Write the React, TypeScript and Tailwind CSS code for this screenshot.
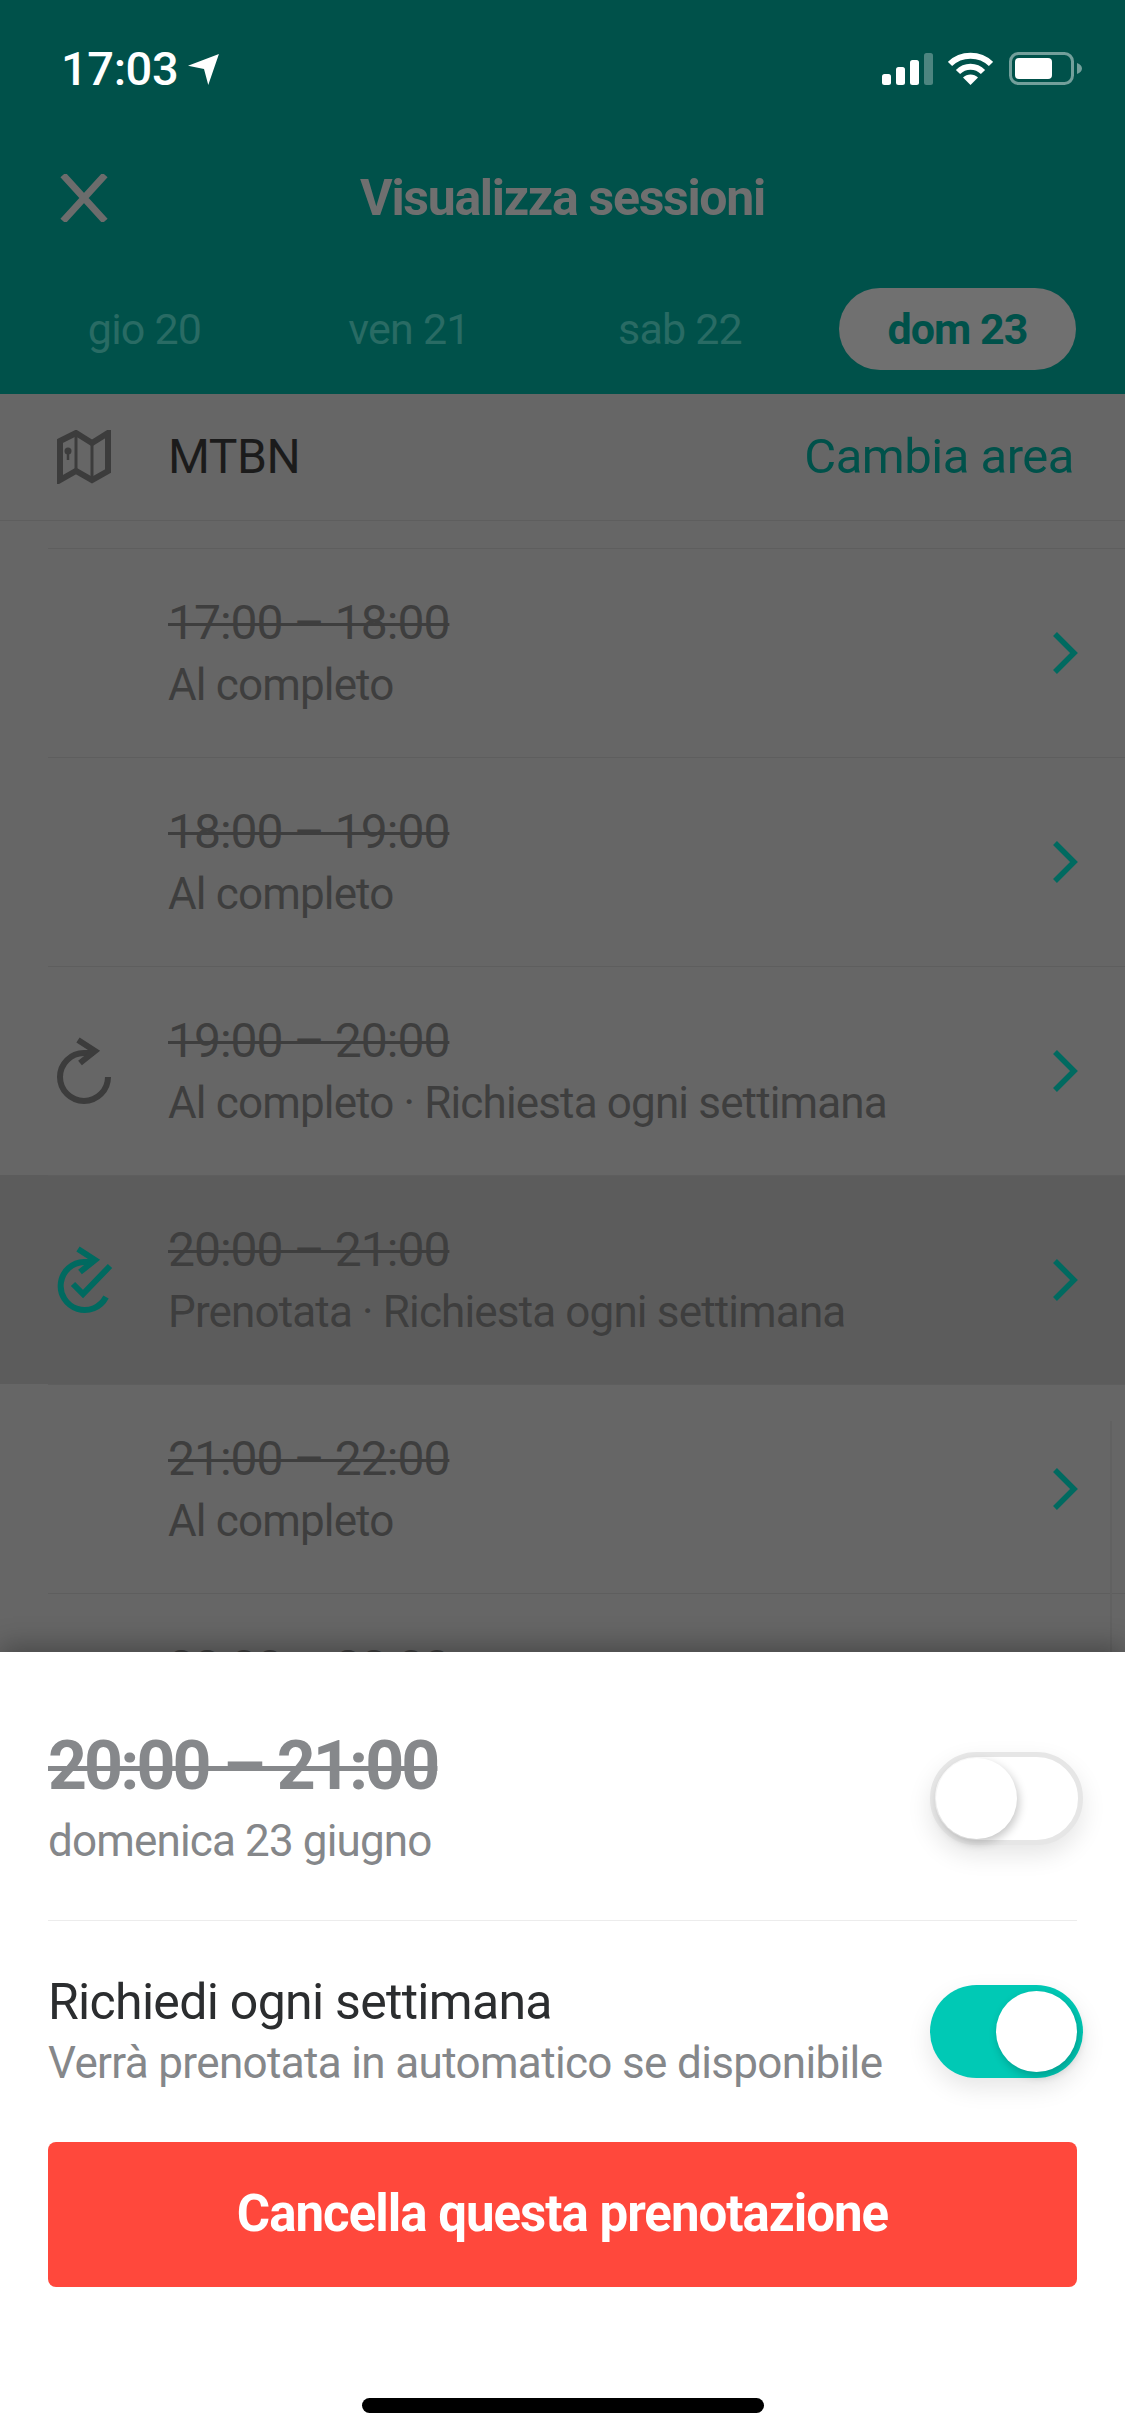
const font = "font-['Roboto',sans-serif]";

const sessions = [
  { time: "17:00 – 18:00", note: "Al completo" },
  { time: "18:00 – 19:00", note: "Al completo" },
  { time: "19:00 – 20:00", note: "Al completo · Richiesta ogni settimana", icon: "repeat" },
  { time: "20:00 – 21:00", note: "Prenotata · Richiesta ogni settimana", icon: "booked", active: true },
  { time: "21:00 – 22:00", note: "Al completo" },
  { time: "22:00 – 23:00", note: "Al completo" },
];

function RepeatIcon() {
  return (
    <svg width="60" height="70" viewBox="0 0 60 70" fill="none" stroke="#3c3c3c" strokeWidth="6">
      <path d="M54 41A24 24 0 1 1 30 17H40" />
      <path d="M24 4L41 15L26 27" />
    </svg>
  );
}

function BookedIcon() {
  return (
    <svg width="60" height="70" viewBox="0 0 60 70" fill="none" stroke="#006a60" strokeWidth="6">
      <path d="M52 52A24 24 0 1 1 30 17H40" />
      <path d="M24 4L41 15L26 27" />
      <path d="M19 39L29 49L56 21" />
    </svg>
  );
}

function Chevron() {
  return (
    <svg width="26" height="42" viewBox="0 0 26 42" fill="none" stroke="#006a60" strokeWidth="5.5">
      <path d="M3 2L22 21L3 40" />
    </svg>
  );
}

function MapIcon() {
  return (
    <svg width="54" height="54" viewBox="0 0 54 54" fill="none" stroke="#3c3c3c" strokeWidth="6">
      <path d="M3 11L19 3L35 13L51 3V41L35 50L19 41L3 50Z" />
      <path d="M19 3V41M35 13V50" strokeWidth="3" />
      <circle cx="11" cy="21" r="3.5" fill="#3c3c3c" stroke="none" />
      <path d="M11 22V30" strokeWidth="2.5" />
    </svg>
  );
}

function StatusIcons() {
  return (
    <div className="flex items-center">
      <svg width="51" height="32" viewBox="0 0 51 32" fill="#fff">
        <rect x="0" y="21" width="9" height="11" rx="2.5" />
        <rect x="14" y="14" width="9" height="18" rx="2.5" />
        <rect x="28" y="7" width="9" height="25" rx="2.5" />
        <rect x="42" y="0" width="9" height="32" rx="2.5" opacity="0.3" />
      </svg>
      <svg className="ml-[15px]" width="45" height="33" viewBox="0 0 45 33" fill="none" stroke="#fff" strokeWidth="6">
        <path d="M2 12C13 1 32 1 43 12" />
        <path d="M10 20C17 13 28 13 35 20" />
        <path d="M22.5 33L15 25.5C19 21.5 26 21.5 30 25.5Z" fill="#fff" stroke="none" />
      </svg>
      <svg className="ml-[16px]" width="73" height="33" viewBox="0 0 73 33" fill="none">
        <rect x="1.5" y="1.5" width="62" height="30" rx="8" stroke="#fff" strokeOpacity="0.45" strokeWidth="3" />
        <rect x="6" y="6" width="37" height="21" rx="4" fill="#fff" />
        <path d="M68 11C71 12 73 14 73 16.5C73 19 71 21 68 22Z" fill="#fff" fillOpacity="0.45" />
      </svg>
    </div>
  );
}

function Toggle({ on }: { on?: boolean }) {
  return (
    <div
      className={`flex h-[93px] w-[153px] items-center rounded-full p-[6px] shadow-[0_10px_24px_rgba(0,0,0,0.1)] ${
        on ? "justify-end bg-[#00c9b5]" : "border-[5px] border-[#e6e6e6] bg-white pl-[1px]"
      }`}
    >
      <div className="h-[81px] w-[81px] rounded-full bg-white shadow-[2px_4px_10px_rgba(0,0,0,0.22)]" />
    </div>
  );
}

export default function App() {
  return (
    <div className={`${font} relative h-[2436px] w-[1125px] overflow-hidden bg-[#666666]`}>
      <header className="h-[394px] bg-[#00514a]">
        <div className="flex h-[138px] items-start justify-between pl-[61px] pr-[43px] pt-[52px]">
          <div className="flex items-center gap-[10px] text-[47px] leading-[34px] font-medium tracking-[-0.4px] text-white">
            17:03
            <svg width="32" height="32" viewBox="0 0 30 30" fill="#fff">
              <path d="M29 1L19 30L15 15L0 12Z" />
            </svg>
          </div>
          <StatusIcons />
        </div>

        <div className="relative flex h-[120px] items-center justify-center">
          <svg className="absolute left-[60px] top-[36px]" width="48" height="48" viewBox="0 0 48 48" stroke="#6c6c6c" strokeWidth="7">
            <path d="M3 1L45 47M45 1L3 47" />
          </svg>
          <h1 className="text-[50px] font-bold tracking-[-1.3px] text-[#6f6f6f]">Visualizza sessioni</h1>
        </div>

        <div className="mt-[30px] flex h-[82px] items-center pl-[12px] text-center text-[43px] tracking-[-0.8px] text-[#296b64]">
          <span className="w-[265px]">gio 20</span>
          <span className="w-[264px]">ven 21</span>
          <span className="w-[278px]">sab 22</span>
          <span className="ml-[20px] flex h-[82px] w-[237px] items-center justify-center rounded-full bg-[#707070] font-bold tracking-[-1px] text-[#00514a]">
            dom 23
          </span>
        </div>
      </header>

      <div className="flex h-[127px] items-center border-b border-[#5e5e5e] pl-[57px] pr-[51px]">
        <MapIcon />
        <span className="ml-[57px] text-[48px] tracking-[-0.4px] text-[#1b1b1b]">MTBN</span>
        <span className="ml-auto text-[49px] tracking-[-0.5px] text-[#00514a]">Cambia area</span>
      </div>

      <div className="h-[27px]" />

      {sessions.map((session) => (
        <div key={session.time} className={session.active ? "bg-[#5c5c5c]" : ""}>
          <div className="ml-[48px] h-px bg-[#5e5e5e]" />
          <div className="flex h-[208px] items-center pl-[54px] pr-[47px]">
            <div className="w-[114px]">
              {session.icon === "repeat" && <RepeatIcon />}
              {session.icon === "booked" && <BookedIcon />}
            </div>
            <div className="flex-1 pt-[3px] text-[#3e3e3e]">
              <div className="text-[48px] leading-[60px] tracking-[-1px] line-through decoration-[3px]">{session.time}</div>
              <div className="text-[44px] leading-[64px] tracking-[-0.85px]">{session.note}</div>
            </div>
            <Chevron />
          </div>
        </div>
      ))}

      <div className="absolute left-[1110px] top-[1421px] h-[231px] w-[2px] bg-[#616161]" />

      <section className="absolute inset-x-0 top-[1652px] h-[784px] bg-white px-[48px] shadow-[0_-6px_26px_rgba(0,0,0,0.3)]">
        <div className="flex h-[269px] items-center justify-between border-b border-[#ececec]">
          <div className="pt-[24px]">
            <div className="text-[68px] leading-[82px] font-bold tracking-[-2.9px] text-[#86888b] line-through decoration-[5px]">
              20:00 – 21:00
            </div>
            <div className="mt-[4px] text-[44px] leading-[60px] tracking-[-0.85px] text-[#85878a]">domenica 23 giugno</div>
          </div>
          <div className="-mr-[6px] mt-[24px]">
            <Toggle />
          </div>
        </div>

        <div className="flex h-[221px] items-center justify-between">
          <div>
            <div className="text-[50px] leading-[62px] tracking-[-0.7px] text-[#2b2d2f]">Richiedi ogni settimana</div>
            <div className="text-[44px] leading-[60px] tracking-[-0.65px] text-[#85878a]">Verrà prenotata in automatico se disponibile</div>
          </div>
          <div className="-mr-[6px]">
            <Toggle on />
          </div>
        </div>

        <button className={`${font} h-[145px] w-full rounded-[8px] bg-[#ff483c] text-[51px] font-bold tracking-[-1px] text-white`}>
          Cancella questa prenotazione
        </button>

        <div className="mx-auto mt-[111px] h-[15px] w-[402px] rounded-full bg-black" />
      </section>
    </div>
  );
}
